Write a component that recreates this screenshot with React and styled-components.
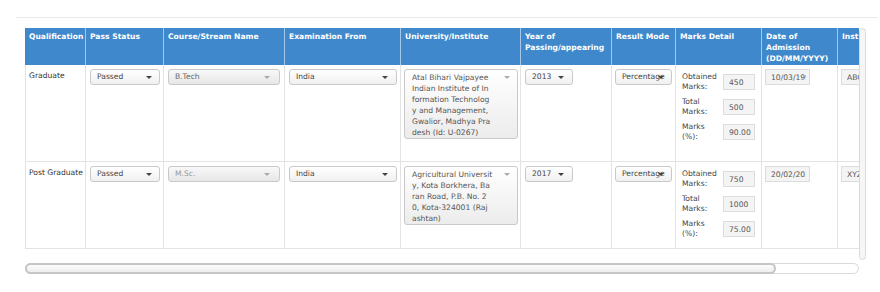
import React from 'react'
import styled, { createGlobalStyle } from 'styled-components'

const COLS = [61, 78, 121, 116, 120, 91, 64, 86, 76, 130]

const GlobalStyle = createGlobalStyle`
  html, body { margin: 0; background: #fff; }
  body { font-family: 'DejaVu Sans', Verdana, sans-serif; }
`

const Page = styled.div`
  width: 880px;
  height: 292px;
  box-sizing: border-box;
  padding: 17px 2px 0 16px;
`

const Panel = styled.div`
  border-top: 1px solid #e9e9e9;
  padding: 10px 0 0 9px;
`

const Frame = styled.div`
  display: flex;
  align-items: flex-start;
`

const Viewport = styled.div`
  width: 834px;
  overflow: hidden;
`

const VScroll = styled.div`
  width: 7px;
  height: 232px;
  box-sizing: border-box;
  border: 1px solid #dadada;
  border-radius: 4px;
  background: #f6f6f6;
`

const HTrack = styled.div`
  display: flex;
  width: 834px;
  height: 11px;
  box-sizing: border-box;
  margin-top: 3px;
  border: 1px solid #d9d9d9;
  border-radius: 6px;
  background: #fff;
`

const HThumb = styled.div`
  width: ${(p) => p.$w}px;
  height: 11px;
  margin: -1px;
  box-sizing: border-box;
  border: 2px solid #c5c5c5;
  border-radius: 6px;
  background: linear-gradient(#fdfdfd, #eeeeee);
`

const Grid = styled.div`
  display: grid;
  grid-template-columns: ${COLS.map((c) => c + 'px').join(' ')};
  grid-template-rows: 37px 97px 87px;
  width: max-content;
  font-size: 7.6px;
  line-height: 11px;
`

const Th = styled.div`
  box-sizing: border-box;
  padding: 3px 4px 0 4px;
  background: #3f88cb;
  color: #fff;
  font-weight: bold;
  border-right: 1px solid #a4c8ea;
  overflow: hidden;
`

const Td = styled.div`
  box-sizing: border-box;
  padding: ${(p) => p.$pad || '4px 4px 0 4px'};
  color: #333;
  border-right: 1px solid #e3e3e3;
  border-bottom: 1px solid #e3e3e3;
  border-left: ${(p) => (p.$first ? '1px solid #e3e3e3' : 'none')};
  overflow: hidden;
`

const Qual = styled.div`
  padding-top: 1px;
  white-space: nowrap;
`

const Select = styled.div`
  position: relative;
  box-sizing: border-box;
  width: ${(p) => p.$w}px;
  height: 16px;
  padding-left: 6px;
  border: 1px solid #c9c9c9;
  border-radius: 3px;
  background: ${(p) => (p.$disabled ? 'linear-gradient(#f8f8f8, #e7e7e7)' : 'linear-gradient(#ffffff, #f0f0f0)')};
  color: ${(p) => p.$color || '#444'};
  line-height: 14px;
  white-space: nowrap;
  overflow: hidden;
`

const MultiSelect = styled(Select)`
  height: auto;
  padding: 2px 16px 0 7px;
  line-height: 11px;
  white-space: normal;
  color: #555;
  background: linear-gradient(#ffffff, #ececec);
`

const Line = styled.span`
  display: block;
  white-space: nowrap;
`

const Caret = styled.span`
  position: absolute;
  right: ${(p) => p.$r || 8}px;
  top: 6px;
  width: 0;
  height: 0;
  border-left: 3px solid transparent;
  border-right: 3px solid transparent;
  border-top: 3px solid ${(p) => (p.$disabled ? '#aaa' : '#444')};
`

const Marks = styled.div`
  display: flex;
  flex-direction: column;
  gap: 5px;
`

const MarkRow = styled.div`
  display: flex;
  align-items: center;
  height: 20px;
`

const MarkLabel = styled.div`
  width: 41px;
  line-height: 10px;
  color: #444;
`

const Field = styled.input`
  width: ${(p) => p.$w}px;
  height: 16px;
  box-sizing: border-box;
  margin: 0;
  padding: 0 3px 0 5px;
  border: 1px solid #dcdcdc;
  background: #f4f4f4;
  color: #555;
  font-family: 'DejaVu Sans', Verdana, sans-serif;
  font-size: 7.6px;
  outline: none;
`

const HEADERS = [
  'Qualification',
  'Pass Status',
  'Course/Stream Name',
  'Examination From',
  'University/Institute',
  'Year of Passing/appearing',
  'Result Mode',
  'Marks Detail',
  'Date of Admission (DD/MM/YYYY)',
  'Inst Name Address',
]

const ROWS = [
  {
    qual: 'Graduate',
    course: 'B.Tech',
    courseColor: '#666',
    uni: [
      'Atal Bihari Vajpayee',
      'Indian Institute of In',
      'formation Technolog',
      'y and Management,',
      'Gwalior, Madhya Pra',
      'desh (Id: U-0267)',
    ],
    year: '2013',
    marks: ['450', '500', '90.00'],
    date: '10/03/1990',
    inst: 'ABC College',
  },
  {
    qual: 'Post Graduate',
    course: 'M.Sc.',
    courseColor: '#999',
    uni: [
      'Agricultural Universit',
      'y, Kota Borkhera, Ba',
      'ran Road, P.B. No. 2',
      '0, Kota-324001 (Raj',
      'ashtan)',
    ],
    year: '2017',
    marks: ['750', '1000', '75.00'],
    date: '20/02/2015',
    inst: 'XYZ College',
  },
]

const LABELS = [
  ['Obtained', 'Marks:'],
  ['Total', 'Marks:'],
  ['Marks', '(%):'],
]

const Row = ({ row }) => (
  <>
    <Td $first $pad="4px 0 0 3px">
      <Qual>{row.qual}</Qual>
    </Td>
    <Td>
      <Select $w={70}>
        Passed
        <Caret $r={7} />
      </Select>
    </Td>
    <Td>
      <Select $w={112} $disabled $color={row.courseColor}>
        {row.course}
        <Caret $r={9} $disabled />
      </Select>
    </Td>
    <Td>
      <Select $w={108}>
        India
        <Caret $r={8} />
      </Select>
    </Td>
    <Td $pad="4px 3px 0 3px">
      <MultiSelect $w={114}>
        {row.uni.map((l) => (
          <Line key={l}>{l}</Line>
        ))}
        <Caret $r={7} $disabled />
      </MultiSelect>
    </Td>
    <Td>
      <Select $w={48}>
        {row.year}
        <Caret $r={8} />
      </Select>
    </Td>
    <Td $pad="4px 3px 0 3px">
      <Select $w={57}>
        Percentage
        <Caret $r={7} />
      </Select>
    </Td>
    <Td $pad="7px 4px 0 6px">
      <Marks>
        {LABELS.map((lab, i) => (
          <MarkRow key={i}>
            <MarkLabel>
              {lab[0]}
              <br />
              {lab[1]}
            </MarkLabel>
            <Field $w={32} readOnly value={row.marks[i]} />
          </MarkRow>
        ))}
      </Marks>
    </Td>
    <Td $pad="4px 3px 0 3px">
      <Field $w={45} readOnly value={row.date} />
    </Td>
    <Td $pad="4px 3px 0 3px">
      <Field $w={110} readOnly value={row.inst} />
    </Td>
  </>
)

export default function App() {
  return (
    <Page>
      <GlobalStyle />
      <Panel>
        <Frame>
          <Viewport>
            <Grid>
              {HEADERS.map((h) => (
                <Th key={h}>{h}</Th>
              ))}
              {ROWS.map((r) => (
                <Row key={r.qual} row={r} />
              ))}
            </Grid>
          </Viewport>
          <VScroll />
        </Frame>
        <HTrack>
          <HThumb $w={751} />
        </HTrack>
      </Panel>
    </Page>
  )
}
